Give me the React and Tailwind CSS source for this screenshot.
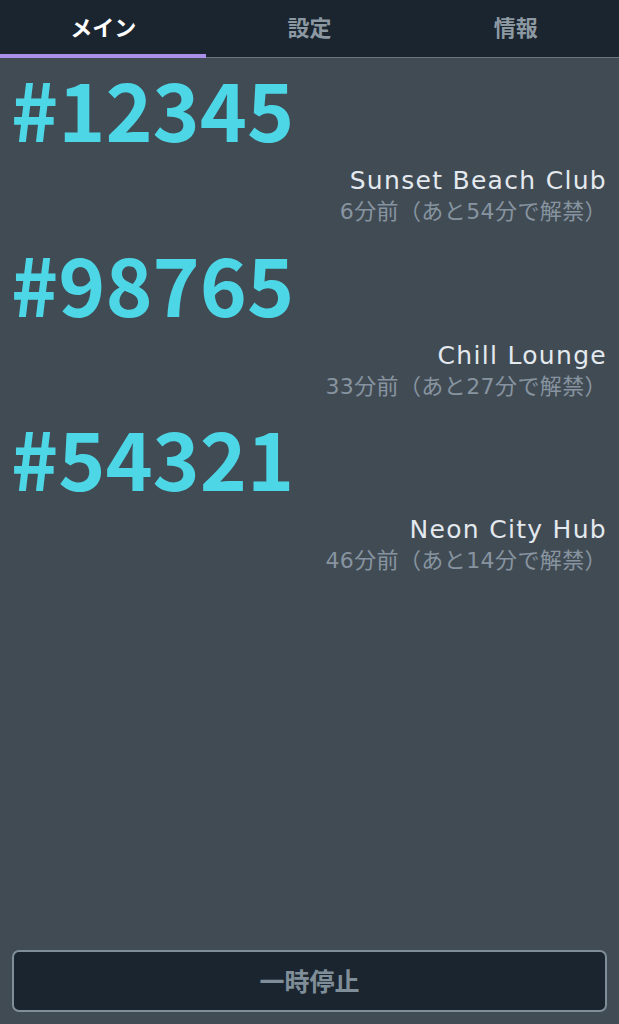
import { useState } from 'react';

const FONT = { fontFamily: '"Noto Sans CJK JP", "Noto Sans", sans-serif' };
const TEXT_FONT = { fontFamily: '"DejaVu Sans", "Noto Sans CJK JP", sans-serif' };

// 監視中のルーム一覧
const rooms = [
  { id: '#12345', name: 'Sunset Beach Club', ago: 6, left: 54 },
  { id: '#98765', name: 'Chill Lounge', ago: 33, left: 27 },
  { id: '#54321', name: 'Neon City Hub', ago: 46, left: 14 },
];

const tabs = ['メイン', '設定', '情報'];

export default function App() {
  const [active, setActive] = useState(0);

  return (
    <div style={FONT} className="flex flex-col h-[1024px] w-full bg-[#414b54] overflow-hidden">
      {/* Tabs */}
      <div className="flex h-[58px] bg-[#1b252f] border-b border-[#6b7780]">
        {tabs.map((t, i) => (
          <button
            key={t}
            onClick={() => setActive(i)}
            className={`relative flex-1 flex items-center justify-center pb-[4px] text-[22px] font-bold ${
              i === active ? 'text-white' : 'text-[#8c99a3]'
            }`}
          >
            {t}
            {i === active && (
              <span className="absolute left-0 right-0 bottom-[-1px] h-[4px] bg-[#a990e8]" />
            )}
          </button>
        ))}
      </div>

      {/* Room list */}
      <div className="flex-1 px-[12px] pt-[9px]">
        {rooms.map((r) => (
          <div key={r.id} className="h-[174.5px] flex flex-col">
            <div className="-ml-[1px] text-[80px] leading-none font-bold text-[#4dd6e6]">{r.id}</div>
            <div style={TEXT_FONT} className="mt-[19px] text-right text-[25px] leading-[30px] tracking-[1.3px] text-[#e3e9ee]">
              {r.name}
            </div>
            <div style={TEXT_FONT} className="mt-[2px] text-right text-[22px] leading-[27px] tracking-[0.4px] text-[#8794a0]">
              {r.ago}分前（あと{r.left}分で解禁）
            </div>
          </div>
        ))}
      </div>

      {/* Pause button */}
      <div className="px-[12px] pb-[12px]">
        <button className="w-full h-[62px] rounded-[7px] border-2 border-[#7f8e98] bg-[#1b252f] text-[#7f8e98] text-[25px] font-bold">
          一時停止
        </button>
      </div>
    </div>
  );
}
